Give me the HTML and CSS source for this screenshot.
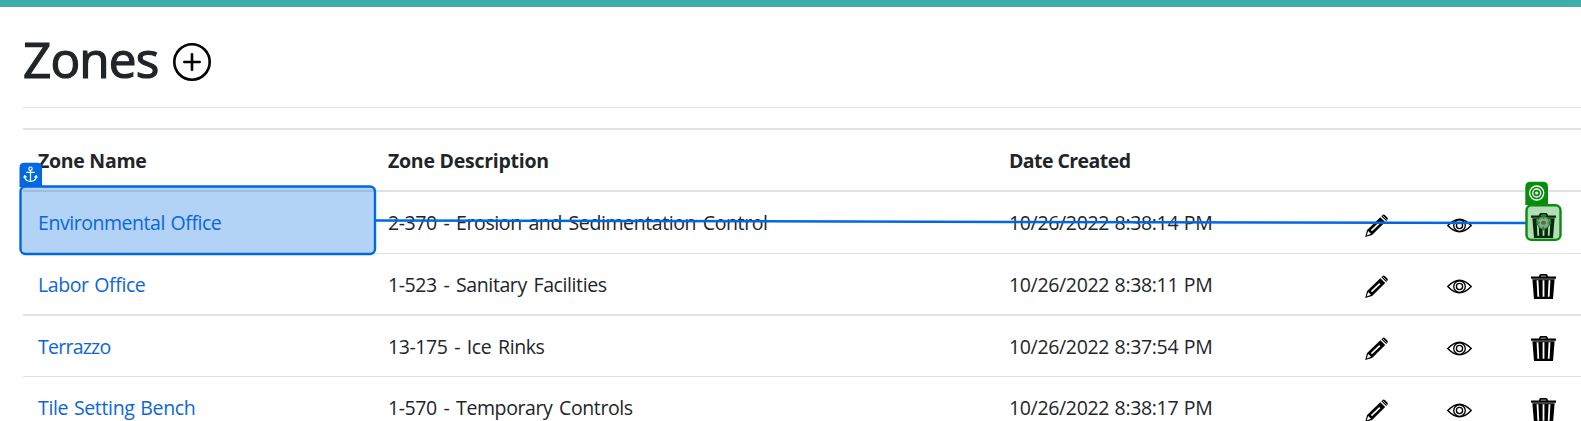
FILE: index.html
```html
<!DOCTYPE html>
<html lang="en">
<head>
<meta charset="utf-8">
<title>Zones</title>
<link rel="stylesheet" href="styles.css">
</head>
<body>
<svg width="0" height="0" class="defs" aria-hidden="true">
  <symbol id="pencil" viewBox="0 0 25 25">
    <path d="M1.2 23.9 3.1 16.9 16.3 4.2 21.2 9.1 8.1 21.9Z"/>
    <path d="M17.3 3.2 18.5 2Q19.6.9 20.8 2L23.3 4.5Q24.4 5.6 23.4 6.7L22.2 8Z"/>
    <path d="M2.7 22.4 4.1 18.1 7 20.8Z" fill="#fff"/>
    <path d="M7.4 17.7 15.8 9.6" stroke="#fff" stroke-width="1.6"/>
    <path d="M18.7 2.7 22.7 6.7" stroke="#fff" stroke-width=".7"/>
  </symbol>
  <symbol id="eye" viewBox="0 0 25 25">
    <g fill="none" stroke="#000" stroke-width="1.35">
      <path d="M.8 12.5Q12.5-.1 24.2 12.5Q12.5 25.1.8 12.5Z"/>
      <circle cx="12.5" cy="12.5" r="5.8"/>
      <circle cx="12.5" cy="12.5" r="3.1"/>
    </g>
  </symbol>
  <symbol id="trash" viewBox="0 0 25 25">
    <path d="M0 2.6H7.8L8.6.7Q8.9.1 9.6.1H15.2Q15.9.1 16.3.7L17.2 2.6H25V4.7H0Z"/>
    <path d="M9.6 2.8 10.3 1.5H14.7L15.4 2.8Z" fill="#888"/>
    <path d="M1.4 5.3H23.6L22 25H3Z"/>
    <path d="M6.5 6.2 7.3 22.7M12.5 6.2V22.7M18.5 6.2 17.7 22.7" stroke="#fff" stroke-width="1.8"/>
  </symbol>
</svg>
<div class="topbar"></div>
<main class="page">
  <header class="heading">
    <h1>Zones</h1>
    <svg class="add" viewBox="0 0 38 38"><circle cx="19" cy="19" r="17.7"/><path d="M19 11.3V26.7M11.3 19H26.7"/></svg>
  </header>
  <section class="table">
    <div class="row head"><span class="c-zn">Zone Name</span><span class="c-zd">Zone Description</span><span class="c-dc">Date Created</span></div>
    <div class="row thick first"><a class="t1">Environmental Office</a><span class="desc">2-370 - Erosion and Sedimentation Control</span><span class="date">10/26/2022 8:38:14 PM</span><svg><use href="#pencil"/></svg><svg><use href="#eye"/></svg><svg><use href="#trash"/></svg></div>
    <div class="row thin"><a class="t2">Labor Office</a><span class="desc">1-523 - Sanitary Facilities</span><span class="date">10/26/2022 8:38:11 PM</span><svg><use href="#pencil"/></svg><svg><use href="#eye"/></svg><svg><use href="#trash"/></svg></div>
    <div class="row thick"><a class="t3">Terrazzo</a><span class="desc">13-175 - Ice Rinks</span><span class="date">10/26/2022 8:37:54 PM</span><svg><use href="#pencil"/></svg><svg><use href="#eye"/></svg><svg><use href="#trash"/></svg></div>
    <div class="row thin last"><a class="t4">Tile Setting Bench</a><span class="desc">1-570 - Temporary Controls</span><span class="date">10/26/2022 8:38:17 PM</span><svg><use href="#pencil"/></svg><svg><use href="#eye"/></svg><svg><use href="#trash"/></svg></div>
  </section>
</main>
<svg class="overlay" viewBox="0 0 1581 421">
  <path d="M376 220.4 1526 223.1" stroke="#0069e0" stroke-width="2.5"/>
  <path d="M19.5 187V167.5Q19.5 162.7 24.3 162.7H37.2Q42 162.7 42 167.5V187Z" fill="#0069e0"/>
  <rect x="20.5" y="186.5" width="354.5" height="67.5" rx="5" fill="#0069e0" fill-opacity=".3" stroke="#0069e0" stroke-width="2.4"/>
  <g fill="none" stroke="#fff" stroke-width="1.2"><circle cx="30.5" cy="168.7" r="1.7"/><path d="M30.5 170.4V181M26.2 172.4H34.8M24.6 176Q25 181.3 30.5 181.3T36.4 176M23.7 177.7 24.7 175.7 26.6 177.2M34.4 177.2 36.3 175.7 37.3 177.7"/></g>
  <path d="M1525.3 205V187Q1525.3 181.8 1530.5 181.8H1543Q1548 181.8 1548 187V205Z" fill="#078c0d"/>
  <rect x="1526.5" y="205.3" width="34" height="34.6" rx="5" fill="#078c0d" fill-opacity=".3" stroke="#078c0d" stroke-width="2.4"/>
  <g fill="none" stroke="#fff" stroke-width="1.3"><circle cx="1536.7" cy="193" r="7"/><circle cx="1536.7" cy="193" r="4"/></g>
  <circle cx="1536.7" cy="193" r="1.6" fill="#fff"/>
  <g fill="none"><circle cx="1543.5" cy="222.8" r="4" stroke="#999" stroke-width="4"/><circle cx="1543.5" cy="222.8" r="6.2" stroke="#169321" stroke-width="1.2"/><path d="M1543.5 215.2V219M1543.5 226.6V230.4M1535.9 222.8H1539.7M1547.3 222.8H1551.1" stroke="#169321" stroke-width="1.3"/></g>
  <circle cx="1543.5" cy="222.8" r="2" fill="#169321"/>
</svg>
</body>
</html>
```
FILE: styles.css
```css
* { box-sizing: border-box; }
body { margin: 0; height: 421px; overflow: hidden; background: #fff; color: #212529; font-family: "Open Sans", "Noto Sans", sans-serif; font-size: 19.5px; }
.defs { display: none; }
.topbar { height: 7px; background: #3daeaa; }
.page { padding-left: 23px; }
.heading { display: flex; align-items: center; gap: 15px; height: 101px; border-bottom: 1px solid #e2e3e4; }
h1 { margin: 3px 0 0; width: 135px; font-size: 49.5px; font-weight: 400; line-height: 60px; letter-spacing: -.9px; -webkit-text-stroke: 1.2px #212529; white-space: nowrap; }
.add { width: 38px; height: 38px; margin-top: 9px; fill: none; stroke: #000; stroke-width: 2.6; stroke-linecap: round; }
.table { margin-top: 20px; }
.row { display: grid; grid-template-columns: 350px 621px 355px 83px 84px 83px; height: 61px; align-items: center; white-space: nowrap; border-top: 1px solid #dee2e6; }
.row > * { margin-left: 15px; }
.row svg { width: 25px; height: 25px; margin-top: 4px; }
.row.first svg { margin-top: 6px; }
.row.last svg { margin-top: 6px; }
.head { height: 62px; border-top-width: 2px; font-weight: 700; }
.thick { height: 63px; border-top-width: 2px; }
.thin + .thick { height: 62px; }
.row a { color: #0d66d8; word-spacing: 1px; }
.t1 { letter-spacing: -.45px; }
.t2 { letter-spacing: -.4px; }
.t3 { letter-spacing: -.75px; }
.t4 { letter-spacing: -.34px; }
.desc { letter-spacing: -.4px; word-spacing: 2px; }
.date { letter-spacing: -.34px; word-spacing: .8px; }
.c-zn { letter-spacing: -.28px; }
.c-zd { letter-spacing: -.25px; }
.c-dc { letter-spacing: -.56px; }
.overlay { position: absolute; left: 0; top: 0; width: 1581px; height: 421px; pointer-events: none; }
```
